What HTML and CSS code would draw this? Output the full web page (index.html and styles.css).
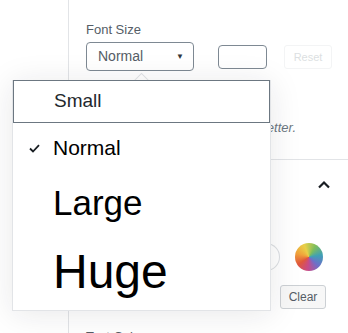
FILE: index.html
```html
<!DOCTYPE html>
<html>
  <head>
    <link rel="stylesheet" href="styles.css">
    <title>Font Size</title>
  </head>
  <body>
    <div class="wrap">
      <div class="gutter"></div>
      <div class="sidebar">
        <div class="fontsize">
          <div class="label">Font Size</div>
          <div class="controls">
            <div class="select">Normal <span class="caret">&#9660;</span></div>
            <div class="number"></div>
            <div class="reset">Reset</div>
          </div>
          <p class="help">to make your text look better.</p>
        </div>
        <div class="panel">
          <div class="panel-head">
            <svg class="chevron" width="14" height="9" viewBox="0 0 14 9">
              <path d="M2 7.5 L7 2.5 L12 7.5" fill="none" stroke="#191e23" stroke-width="2.2"/>
            </svg>
          </div>
          <div class="swatches">
            <span class="swatch"></span>
            <span class="swatch"></span>
            <span class="swatch"></span>
            <span class="swatch"></span>
            <span class="swatch custom"></span>
          </div>
          <div class="clear-row"><div class="clear">Clear</div></div>
          <div class="label next">Text Color</div>
        </div>
      </div>
    </div>

    <div class="notch"></div>
    <ul class="menu">
      <li class="item small focused">Small</li>
      <li class="item normal">
        <svg class="check" width="11" height="9" viewBox="0 0 11 9">
          <path d="M1 4.5 L4 7.5 L10 1.2" fill="none" stroke="#191e23" stroke-width="1.8"/>
        </svg>Normal</li>
      <li class="item large">Large</li>
      <li class="item huge">Huge</li>
    </ul>
  </body>
</html>
```

FILE: styles.css
```css
* {
    box-sizing: border-box;
    font-family: "Liberation Sans", Arial, sans-serif;
}

body {
    margin: 0;
    width: 348px;
    height: 333px;
    overflow: hidden;
    background: #fff;
    position: relative;
}

.wrap {
    display: flex;
    height: 333px;
}

.gutter {
    width: 69px;
    border-right: 1px solid #e2e4e7;
}

.sidebar {
    flex: 1;
}

.fontsize {
    padding: 22px 0 0 17px;
}

.label {
    font-size: 13px;
    line-height: 16px;
    color: #555d66;
    margin-bottom: 4px;
}

.controls {
    display: flex;
    align-items: center;
}

.select {
    width: 108px;
    height: 29px;
    border: 1px solid #7e8993;
    border-radius: 4px;
    font-size: 14px;
    color: #555d66;
    padding-left: 11px;
    line-height: 27px;
    position: relative;
}

.caret {
    position: absolute;
    right: 9px;
    top: 0;
    font-size: 8px;
    color: #32373c;
}

.number {
    width: 49px;
    height: 24px;
    margin-left: 24px;
    border: 1px solid #7e8993;
    border-radius: 4px;
}

.reset {
    width: 48px;
    height: 24px;
    margin-left: 17px;
    border: 1px solid #f3f4f5;
    border-radius: 3px;
    font-size: 11px;
    line-height: 22px;
    text-align: center;
    color: #dcdfe2;
}

.help {
    margin: 48px 0 0;
    height: 40px;
    padding-right: 52px;
    text-align: right;
    font-size: 13px;
    line-height: 18px;
    font-style: italic;
    color: #6c7781;
}

.panel {
    border-top: 1px solid #e2e4e7;
}

.panel-head {
    height: 48px;
    display: flex;
    justify-content: flex-end;
    align-items: center;
    padding-right: 17px;
}

.swatches {
    margin-top: 35px;
    display: flex;
    justify-content: flex-end;
    gap: 15px;
    padding-right: 25px;
}

.swatch {
    width: 28px;
    height: 28px;
    border-radius: 50%;
    box-shadow: inset 0 0 0 1px #dcdfe2;
}

.custom {
    box-shadow: none;
    background: conic-gradient(from 30deg, #7fbe5c, #3fa0b6, #6d6fc9, #c64a8a, #e0573c, #f0a23a, #e9d048, #7fbe5c);
}

.clear-row {
    margin-top: 14px;
    display: flex;
    justify-content: flex-end;
    padding-right: 22px;
}

.clear {
    width: 46px;
    height: 24px;
    border: 1px solid #ccd0d4;
    border-radius: 3px;
    background: #f7f7f7;
    font-size: 12px;
    line-height: 22px;
    text-align: center;
    color: #555d66;
}

.label.next {
    margin: 20px 0 0 17px;
}

.notch {
    position: absolute;
    left: 136px;
    top: 75px;
    width: 11px;
    height: 11px;
    background: #fff;
    border-top: 1px solid #e2e4e7;
    border-left: 1px solid #e2e4e7;
    transform: rotate(45deg);
}

.menu {
    position: absolute;
    left: 12px;
    top: 80px;
    width: 259px;
    height: 231px;
    margin: 0;
    padding: 0;
    list-style: none;
    background: #fff;
    border: 1px solid #e2e4e7;
    box-shadow: 0 3px 30px rgba(25, 30, 35, 0.1);
}

.item {
    position: relative;
    padding-left: 40px;
    color: #000;
}

.small {
    height: 42px;
    line-height: 40px;
    font-size: 19px;
    color: #23282d;
}

.focused {
    border: 1px solid #6c7781;
    margin-top: -1px;
    height: 43px;
}

.normal {
    height: 49px;
    line-height: 49px;
    font-size: 21px;
}

.check {
    position: absolute;
    left: 16px;
    top: 21px;
}

.large {
    height: 62px;
    line-height: 62px;
    font-size: 35px;
}

.huge {
    height: 76px;
    line-height: 76px;
    font-size: 48px;
}
```
